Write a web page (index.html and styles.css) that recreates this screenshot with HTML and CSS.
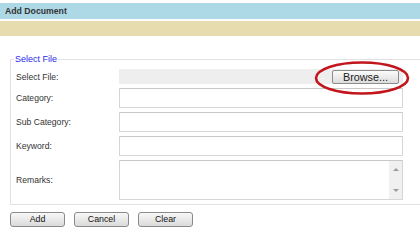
FILE: index.html
```html
<!DOCTYPE html>
<html>
<head>
<meta charset="utf-8">
<link rel="stylesheet" href="styles.css">
</head>
<body>
<div class="page">
  <div class="title-bar">Add Document</div>
  <div class="sub-bar"></div>
  <fieldset class="box">
    <legend class="legend">Select File</legend>
    <div class="row row-file">
      <span class="label">Select File:</span>
      <div class="file-field">
        <span class="browse">Browse...</span>
        <svg class="ring" width="96" height="36" viewBox="0 0 96 36"><ellipse cx="48" cy="18" rx="46" ry="15.5" fill="none" stroke="#c3161c" stroke-width="2.6"/></svg>
      </div>
    </div>
    <div class="row">
      <span class="label">Category:</span>
      <div class="field"></div>
    </div>
    <div class="row">
      <span class="label">Sub Category:</span>
      <div class="field"></div>
    </div>
    <div class="row">
      <span class="label">Keyword:</span>
      <div class="field"></div>
    </div>
    <div class="row">
      <span class="label">Remarks:</span>
      <div class="field area">
        <div class="area-body"></div>
        <div class="scroll">
          <span class="arrow up"></span>
          <span class="arrow down"></span>
        </div>
      </div>
    </div>
  </fieldset>
  <div class="actions">
    <span class="btn">Add</span>
    <span class="btn">Cancel</span>
    <span class="btn">Clear</span>
  </div>
</div>
</body>
</html>
```
FILE: styles.css
```css
html, body {
  margin: 0;
  padding: 0;
  background: #ffffff;
  overflow: hidden;
}
.page {
  width: 440px;
  padding-top: 3px;
  font-family: "Liberation Sans", Arial, sans-serif;
  color: #3a3a3a;
}
.title-bar {
  height: 16px;
  line-height: 16px;
  background: #add8e6;
  font-weight: bold;
  font-size: 8.7px;
  padding-left: 5px;
  color: #333;
  width: 415px;
}
.sub-bar {
  margin-top: 2px;
  height: 15px;
  background: #e6dcae;
  width: 420px;
}
.box {
  margin: 18px 0 0 10px;
  padding: 4px 0 4px 5px;
  border: 1px solid #e2e2e2;
  width: 420px;
  display: flex;
  flex-direction: column;
  gap: 4px;
  min-width: 0;
}
.legend {
  font-size: 9px;
  color: #2b2bea;
  padding: 0 1px;
  margin-left: -2px;
  line-height: 11px;
}
.row {
  display: flex;
  align-items: center;
  height: 20px;
}
.row-file {
  height: 15px;
}
.label {
  width: 103px;
  font-size: 8.6px;
  color: #333;
}
.field {
  width: 282px;
  height: 18px;
  border: 1px solid #d6d6d6;
  border-top-color: #c8c8c8;
  background: #fff;
}
.file-field {
  position: relative;
  width: 284px;
  height: 15px;
  background: #eeeeee;
  display: flex;
  align-items: center;
  justify-content: flex-end;
}
.browse {
  box-sizing: border-box;
  width: 67px;
  height: 14px;
  margin-right: 4px;
  margin-top: 1px;
  border: 1px solid #8c8c8c;
  border-radius: 2px;
  background: linear-gradient(#fbfbfb, #dcdcdc);
  font-size: 10.8px;
  line-height: 12px;
  text-align: center;
  color: #222;
}
.ring {
  position: absolute;
  right: -7px;
  top: -9px;
}
.area {
  height: 38px;
  display: flex;
}
.row:last-child {
  height: 40px;
}
.area-body {
  flex: 1;
}
.scroll {
  width: 13px;
  background: #f0f0f0;
  display: flex;
  flex-direction: column;
  align-items: center;
  justify-content: space-between;
  padding: 7px 0 7px;
}
.arrow {
  width: 0;
  height: 0;
  border-left: 3px solid transparent;
  border-right: 3px solid transparent;
}
.arrow.up {
  border-bottom: 3px solid #9a9a9a;
}
.arrow.down {
  border-top: 3px solid #9a9a9a;
}
.actions {
  display: flex;
  gap: 9px;
  margin: 7px 0 0 10px;
}
.btn {
  box-sizing: border-box;
  width: 55px;
  height: 15px;
  border: 1px solid #8a8a8a;
  border-radius: 3px;
  background: linear-gradient(#f8f8f8, #dadada);
  font-size: 8.8px;
  line-height: 13px;
  text-align: center;
  color: #111;
}
```
